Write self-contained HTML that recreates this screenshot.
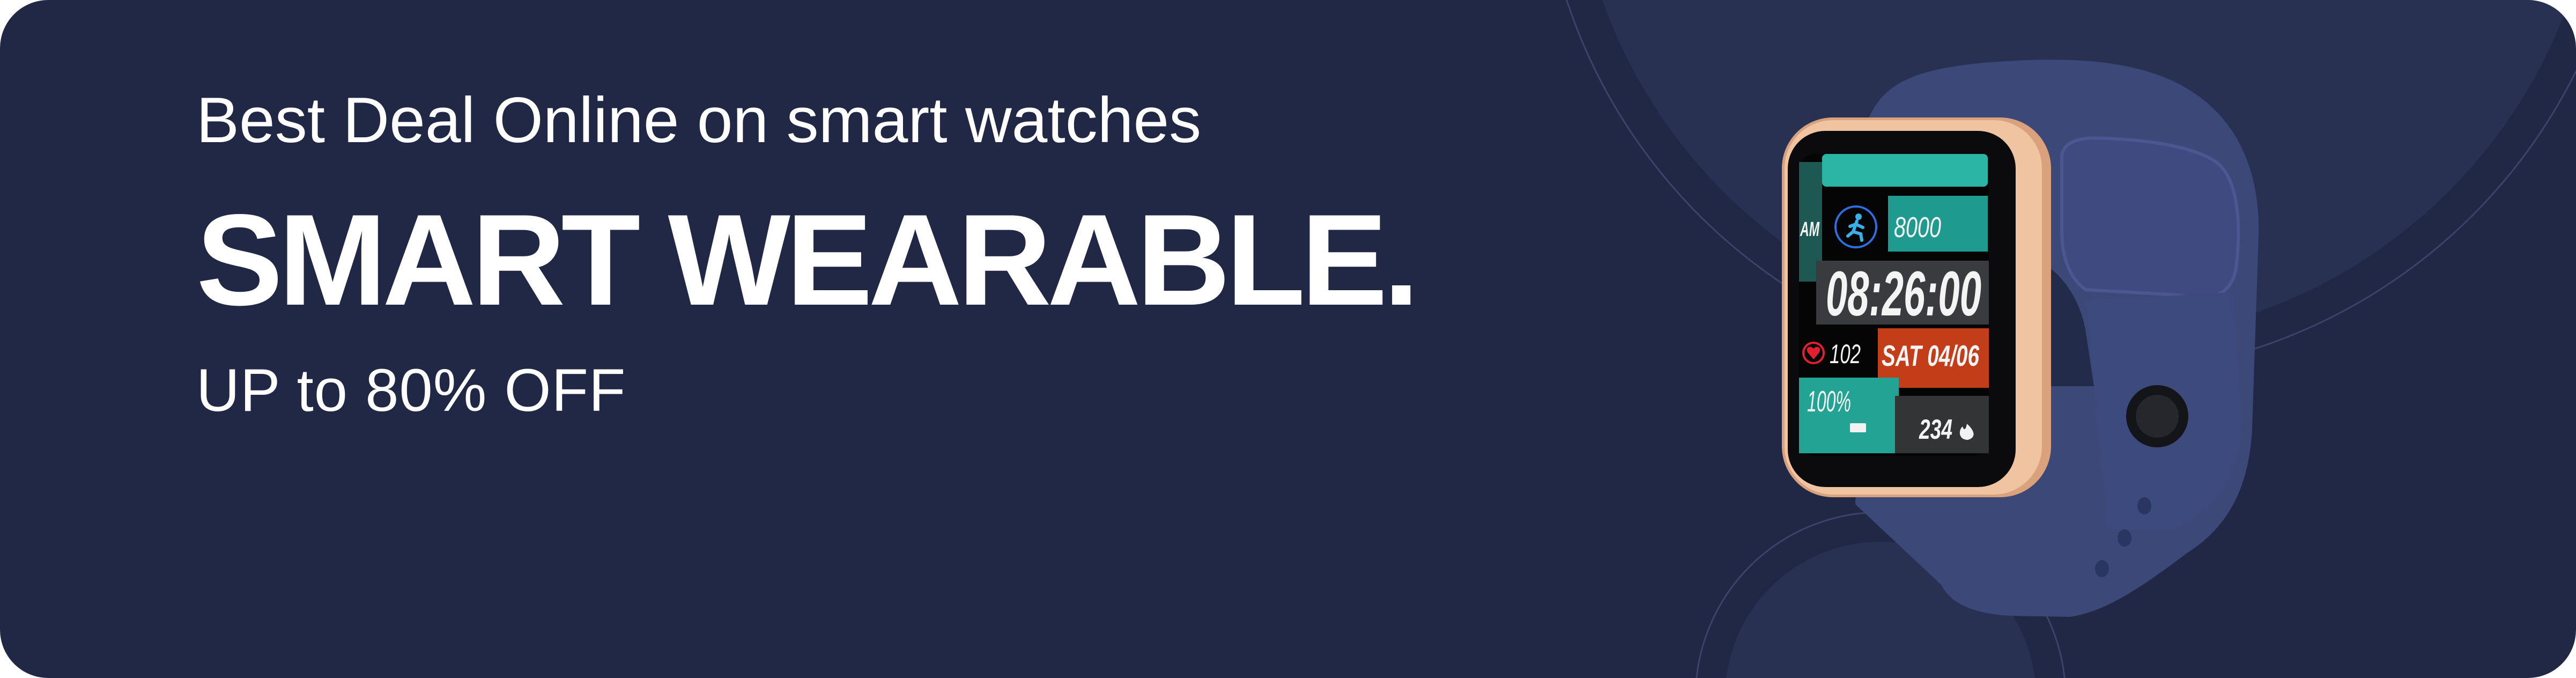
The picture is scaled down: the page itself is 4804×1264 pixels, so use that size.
<!DOCTYPE html>
<html><head><meta charset="utf-8"><style>
html,body{margin:0;padding:0;background:#fff;width:4804px;height:1264px;overflow:hidden;}
#b{position:relative;width:4804px;height:1264px;overflow:hidden;border-radius:90px;background:#212845;}
svg{position:absolute;left:0;top:0;display:block;}
.t{position:absolute;left:366px;color:#fff;font-family:"Liberation Sans",sans-serif;white-space:nowrap;line-height:1;}
</style></head><body><div id="b">
<svg width="4804" height="1264" viewBox="0 0 4804 1264">
<circle cx="3890" cy="-320" r="957" fill="#293152"/>
<circle cx="3890" cy="-320" r="1020" fill="none" stroke="#3a4468" stroke-width="3"/>
<circle cx="3507" cy="1300" r="290" fill="#293152"/>
<circle cx="3507" cy="1300" r="345" fill="none" stroke="#3a4468" stroke-width="3"/>
<!-- strap -->
<path d="M3483 225 C3510 160 3560 130 3700 117 C3850 105 3960 110 4050 150 C4180 210 4215 330 4212 440 L4200 800 C4195 900 4160 980 4080 1030 C4000 1090 3930 1140 3860 1150 L3750 1148 C3690 1145 3640 1130 3620 1090 L3460 940 Z" fill="#3c4878"/>
<path d="M3823 500 C3850 520 3880 560 3890 620 L3905 720 L3823 720 Z" fill="#232b4b"/>
<path d="M3845 290 C3850 262 3880 255 3930 258 C4020 262 4090 275 4130 300 C4175 330 4180 420 4170 500 C4160 560 4110 560 4060 550 L3890 540 C3860 520 3845 480 3845 430 Z" fill="#3f4b80" stroke="#4a5790" stroke-width="6"/>
<path d="M3890 560 L4165 545 L4180 800 C4175 900 4120 960 4040 990 L3930 985 C3915 850 3905 700 3890 560 Z" fill="#3d4a7d"/>
<circle cx="4023" cy="776" r="58" fill="#141518"/>
<circle cx="4023" cy="776" r="40" fill="#25272c"/>
<ellipse cx="3999" cy="943" rx="13" ry="16" fill="#2b3561"/>
<ellipse cx="3962" cy="1003" rx="13" ry="16" fill="#2b3561"/>
<ellipse cx="3920" cy="1060" rx="13" ry="16" fill="#2b3561"/>
<!-- body -->
<rect x="3795" y="493" width="30" height="170" rx="12" fill="#e8a97c"/>
<rect x="3323" y="219" width="502" height="708" rx="95" fill="#d9a17c"/>
<rect x="3328" y="224" width="480" height="698" rx="90" fill="#f0c4a0"/>
<rect x="3334" y="244" width="425" height="664" rx="70" fill="#0b0b0d"/>
<rect x="3355" y="287" width="354" height="563" rx="30" fill="#050506"/>
<rect x="3398" y="287" width="309" height="61" rx="8" fill="#2bb5a4"/>
<rect x="3355" y="302" width="43" height="223" fill="#1d5852"/>
<circle cx="3461" cy="423" r="38" fill="none" stroke="#2d6ee0" stroke-width="4"/>
<circle cx="3466" cy="404" r="6" fill="#3ab0e8"/>
<path d="M3463 412 L3456 432 L3446 440 M3456 432 L3470 436 L3472 448 M3461 418 L3474 424 M3461 418 L3450 422" stroke="#3ab0e8" stroke-width="6" fill="none" stroke-linecap="round"/>
<rect x="3521" y="365" width="186" height="104" fill="#1f9a8e"/>
<rect x="3387" y="486" width="322" height="119" fill="#3a3b3e"/>
<rect x="3502" y="612" width="207" height="111" fill="#c23d18"/>
<rect x="3355" y="704" width="186" height="141" fill="#23a393"/>
<rect x="3534" y="738" width="175" height="107" fill="#333436"/>
<g font-family="Liberation Sans Narrow,Liberation Sans,sans-serif" font-style="italic" fill="#f4f4f4">
<text x="3357" y="440" font-size="38" font-weight="bold" textLength="36" lengthAdjust="spacingAndGlyphs">AM</text>
<text x="3532" y="442" font-size="54" textLength="88" lengthAdjust="spacingAndGlyphs">8000</text>
<text x="3405" y="588" font-size="118" font-weight="bold" textLength="290" lengthAdjust="spacingAndGlyphs">08:26:00</text>
<text x="3412" y="677" font-size="50" textLength="58" lengthAdjust="spacingAndGlyphs">102</text>
<text x="3509" y="682" font-size="55" font-weight="bold" textLength="182" lengthAdjust="spacingAndGlyphs">SAT 04/06</text>
<text x="3370" y="767" font-size="55" textLength="82" lengthAdjust="spacingAndGlyphs">100%</text>
<text x="3579" y="818" font-size="52" font-weight="bold" textLength="62" lengthAdjust="spacingAndGlyphs">234</text>
</g>
<circle cx="3382" cy="658" r="19" fill="none" stroke="#e02030" stroke-width="4"/>
<path d="M3382 670 L3372 658 C3366 650 3374 642 3382 650 C3390 642 3398 650 3392 658 Z" fill="#e02030"/>
<rect x="3450" y="789" width="30" height="17" rx="2" fill="#f2f2f2"/>
<path d="M3670 820 C3652 820 3652 802 3660 795 C3662 802 3666 803 3668 790 C3680 800 3688 815 3670 820 Z" fill="#f2f2f2"/>
</svg>
<div class="t" style="top:164px;font-size:120px;">Best Deal Online on smart watches</div>
<div class="t" style="top:364px;font-size:242px;font-weight:bold;letter-spacing:-8px;">SMART WEARABLE.</div>
<div class="t" style="top:672px;font-size:112px;letter-spacing:1px;">UP to 80% OFF</div>
</div></body></html>
